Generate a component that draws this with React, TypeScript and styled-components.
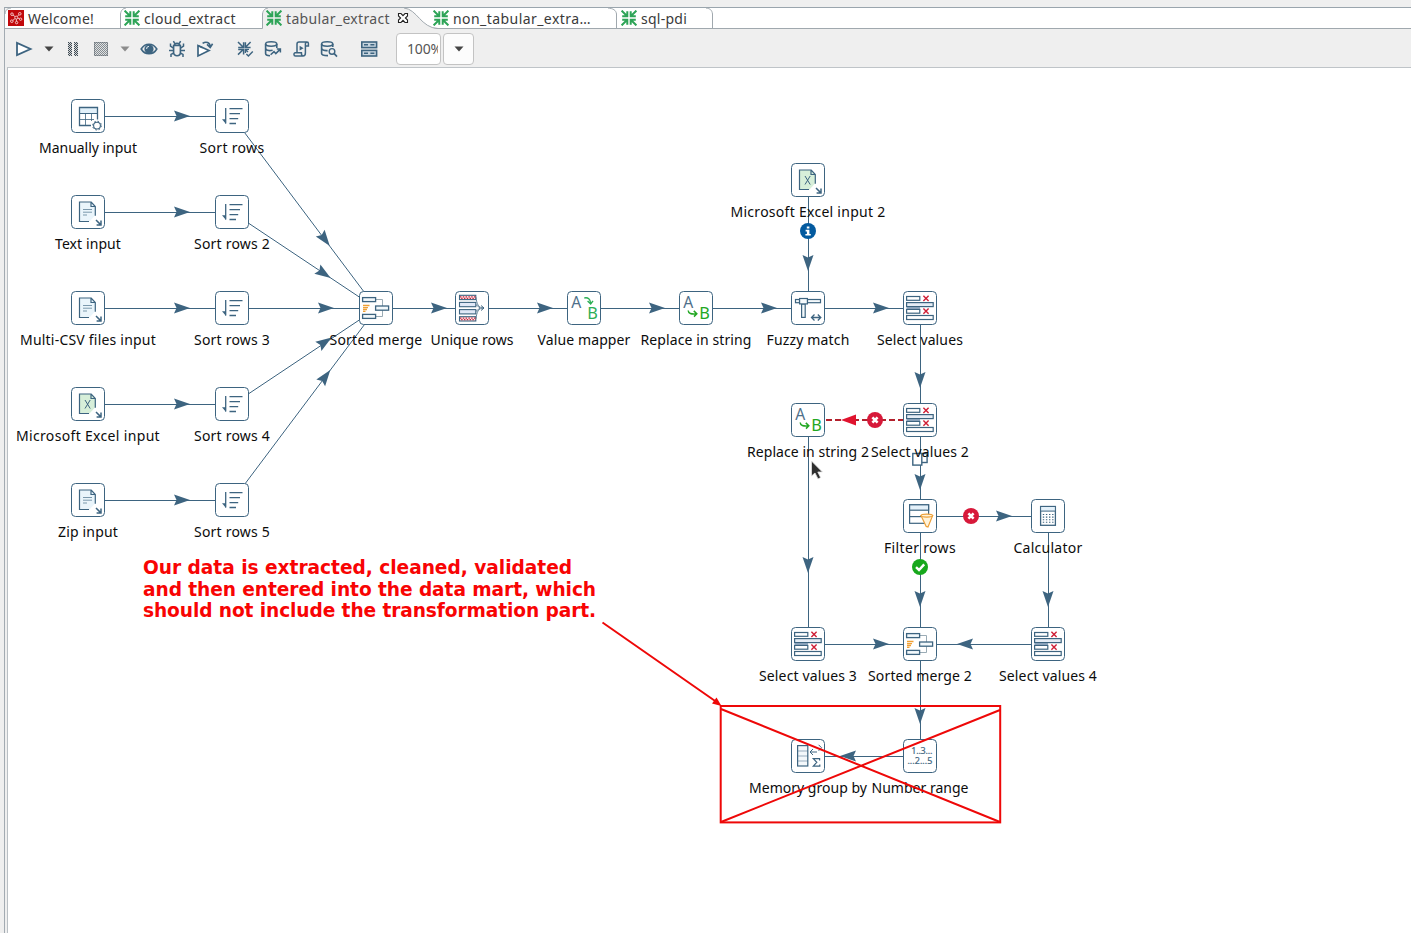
import React, { useLayoutEffect, useRef } from 'react';
import styled, { createGlobalStyle } from 'styled-components';

const INK = '#3d6480';
const UI_FONT = '"Noto Sans", "Open Sans", sans-serif';
const ORIGIN_X = 8;
const ORIGIN_Y = 68;

const GlobalStyle = createGlobalStyle`
  * { box-sizing: border-box; }
  body { margin: 0; background: #efefef; font-family: ${UI_FONT}; overflow: hidden; }
`;

const Window = styled.div`
  width: 1411px;
  height: 933px;
  padding: 7px 0 0 4px;
  background: #efefef;
`;

const Folder = styled.div`
  display: flex;
  flex-direction: column;
  height: 926px;
  border-left: 1px solid #a3abb2;
  border-top: 1px solid #9aa5ad;
`;

const TabStrip = styled.div`
  display: flex;
  height: 21px;
  flex: none;
  background: #fff;
  border-bottom: 1px solid #a0a8ae;
`;

const Tab = styled.div<{ $width: number; $active?: boolean }>`
  position: relative;
  display: flex;
  align-items: center;
  gap: 4px;
  width: ${p => p.$width}px;
  height: 20px;
  padding-left: 3px;
  flex: none;
  color: ${p => (p.$active ? '#555' : '#3a3a3a')};
  font-size: 14px;
  line-height: 20px;
`;

const TabShape = styled.svg`
  position: absolute;
  left: 0;
  top: 0;
  overflow: visible;
`;

const TabIcon = styled.svg`
  position: relative;
  flex: none;
  width: 16px;
  height: 16px;
`;

const TabText = styled.span`
  position: relative;
  top: 1px;
  white-space: nowrap;
`;

const CloseIcon = styled.svg`
  position: relative;
  margin-left: 3px;
  flex: none;
`;

const Toolbar = styled.div`
  display: flex;
  align-items: center;
  height: 38px;
  flex: none;
  padding: 2px 0 0 6px;
  background: #efefef;
`;

const Tool = styled.div<{ $width: number; $gap?: number }>`
  display: flex;
  justify-content: center;
  align-items: center;
  width: ${p => p.$width}px;
  height: 20px;
  margin-left: ${p => p.$gap ?? 0}px;
  flex: none;
  svg { display: block; overflow: visible; }
`;

const ZoomField = styled.div`
  width: 45px;
  height: 32px;
  margin-left: 13px;
  padding-left: 10px;
  border: 1px solid #c3c3c3;
  border-radius: 4px;
  background: #fff;
  color: #555;
  font-size: 14px;
  line-height: 30px;
`;

const ZoomClip = styled.div`
  overflow: hidden;
  width: 31px;
  white-space: nowrap;
`;

const ZoomButton = styled.div`
  display: flex;
  align-items: center;
  justify-content: center;
  width: 31px;
  height: 32px;
  margin-left: 2px;
  border: 1px solid #c3c3c3;
  border-radius: 4px;
  background: #fcfcfc;
`;

const Canvas = styled.div`
  position: relative;
  flex: 1;
  margin-left: 2px;
  border-left: 1px solid #b9bfc4;
  border-top: 1px solid #bfc4c8;
  background: #fff;
`;

const Layer = styled.svg`
  position: absolute;
  left: 0;
  top: 0;
  pointer-events: none;
`;

const Step = styled.div<{ $x: number; $y: number }>`
  position: absolute;
  left: ${p => p.$x - ORIGIN_X - 17}px;
  top: ${p => p.$y - ORIGIN_Y - 17}px;
  width: 34px;
  display: flex;
  flex-direction: column;
  align-items: center;
`;

const StepBox = styled.svg`
  flex: none;
  width: 34px;
  height: 34px;
`;

const StepLabel = styled.div`
  margin-top: 4px;
  color: #0c0c0c;
  font-size: 14px;
  line-height: 22px;
  white-space: nowrap;
`;

const Note = styled.div`
  position: absolute;
  left: 135px;
  top: 489px;
  color: #f80404;
  font: bold 18.6px/21.5px "DejaVu Sans", sans-serif;
  white-space: nowrap;
`;

const NoteLine = styled.div`
  height: 21.5px;
`;

/* Tracks the letters so that the text takes a given width. */
function Fit({ text, width }: { text: string; width: number }) {
  const ref = useRef<HTMLSpanElement>(null);
  useLayoutEffect(() => {
    const el = ref.current;
    if (!el) return;
    el.style.letterSpacing = '0px';
    const gap = (width - el.getBoundingClientRect().width) / text.length;
    el.style.letterSpacing = `${gap}px`;
  }, [text, width]);
  return <span ref={ref}>{text}</span>;
}

type Kind =
  | 'grid' | 'text' | 'excel' | 'sort' | 'merge' | 'unique' | 'mapper'
  | 'replace' | 'fuzzy' | 'select' | 'filter' | 'calc' | 'range' | 'group';

interface StepData { x: number; y: number; kind: Kind; label: string; w: number }

const steps: StepData[] = [
  { x: 88, y: 116, kind: 'grid', label: 'Manually input', w: 98 },
  { x: 88, y: 212, kind: 'text', label: 'Text input', w: 66 },
  { x: 88, y: 308, kind: 'text', label: 'Multi-CSV files input', w: 136 },
  { x: 88, y: 404, kind: 'excel', label: 'Microsoft Excel input', w: 144 },
  { x: 88, y: 500, kind: 'text', label: 'Zip input', w: 60 },
  { x: 232, y: 116, kind: 'sort', label: 'Sort rows', w: 65 },
  { x: 232, y: 212, kind: 'sort', label: 'Sort rows 2', w: 76 },
  { x: 232, y: 308, kind: 'sort', label: 'Sort rows 3', w: 76 },
  { x: 232, y: 404, kind: 'sort', label: 'Sort rows 4', w: 76 },
  { x: 232, y: 500, kind: 'sort', label: 'Sort rows 5', w: 76 },
  { x: 376, y: 308, kind: 'merge', label: 'Sorted merge', w: 93 },
  { x: 472, y: 308, kind: 'unique', label: 'Unique rows', w: 83 },
  { x: 584, y: 308, kind: 'mapper', label: 'Value mapper', w: 93 },
  { x: 696, y: 308, kind: 'replace', label: 'Replace in string', w: 111 },
  { x: 808, y: 180, kind: 'excel', label: 'Microsoft Excel input 2', w: 155 },
  { x: 808, y: 308, kind: 'fuzzy', label: 'Fuzzy match', w: 83 },
  { x: 920, y: 308, kind: 'select', label: 'Select values', w: 86 },
  { x: 808, y: 420, kind: 'replace', label: 'Replace in string 2', w: 122 },
  { x: 920, y: 420, kind: 'select', label: 'Select values 2', w: 98 },
  { x: 920, y: 516, kind: 'filter', label: 'Filter rows', w: 72 },
  { x: 1048, y: 516, kind: 'calc', label: 'Calculator', w: 69 },
  { x: 808, y: 644, kind: 'select', label: 'Select values 3', w: 98 },
  { x: 920, y: 644, kind: 'merge', label: 'Sorted merge 2', w: 104 },
  { x: 1048, y: 644, kind: 'select', label: 'Select values 4', w: 98 },
  { x: 808, y: 756, kind: 'group', label: 'Memory group by', w: 118 },
  { x: 920, y: 756, kind: 'range', label: 'Number range', w: 97 },
];

/* from x/y, to x/y, arrow x/y */
type Hop = [number, number, number, number, number, number];

const hops: Hop[] = [
  [88, 116, 232, 116, 182, 116],
  [88, 212, 232, 212, 182, 212],
  [88, 308, 232, 308, 182, 308],
  [88, 404, 232, 404, 182, 404],
  [88, 500, 232, 500, 182, 500],
  [232, 116, 376, 308, 325, 239.5],
  [232, 212, 376, 308, 324, 273.5],
  [232, 308, 376, 308, 326, 308],
  [232, 500, 376, 308, 325.5, 376.5],
  [232, 404, 376, 308, 325, 342],
  [376, 308, 472, 308, 439, 308],
  [472, 308, 584, 308, 545, 308],
  [584, 308, 696, 308, 657, 308],
  [696, 308, 808, 308, 769, 308],
  [808, 308, 920, 308, 881, 308],
  [808, 180, 808, 308, 808, 263],
  [920, 308, 920, 420, 920, 380],
  [920, 420, 920, 516, 920, 482],
  [920, 516, 920, 644, 920, 599],
  [920, 516, 1048, 516, 1004, 516],
  [1048, 516, 1048, 644, 1048, 599],
  [808, 420, 808, 644, 808, 565],
  [808, 644, 920, 644, 881, 644],
  [1048, 644, 920, 644, 965, 644],
  [920, 644, 920, 756, 920, 716],
  [920, 756, 808, 756, 848, 756],
];

function HopLine({ hop }: { hop: Hop }) {
  const [x1, y1, x2, y2, ax, ay] = hop;
  const angle = (Math.atan2(y2 - y1, x2 - x1) * 180) / Math.PI;
  return (
    <g>
      <line x1={x1 + 0.5} y1={y1 + 0.5} x2={x2 + 0.5} y2={y2 + 0.5} stroke={INK} strokeWidth="1" />
      <path d="M-8 -5.5L8 0L-8 5.5L-5.5 0Z" fill={INK} transform={`translate(${ax} ${ay}) rotate(${angle})`} />
    </g>
  );
}

function Cross({ x, y }: { x: number; y: number }) {
  return <path d={`M${x - 2.6} ${y - 2.6}l5.2 5.2m0 -5.2l-5.2 5.2`} stroke="#cf1f36" strokeWidth="1.4" />;
}

function CornerArrow() {
  return <path d="M25 25L29.6 29.6M30 25.6V30H25.6" fill="none" stroke={INK} strokeWidth="1.5" />;
}

function Glyph({ kind }: { kind: Kind }) {
  switch (kind) {
    case 'grid':
      return (
        <g fill="none" stroke={INK}>
          <rect x="8.5" y="8.5" width="18" height="6" fill="#e2f1fa" />
          <path d="M20 26.5H8.5V8.5H26.5V20.5" strokeWidth="1.3" />
          <path d="M8.5 14.5H26.5M8.5 20.5H23M14.5 14.5V26.5M20.5 14.5V22" strokeWidth=".8" />
          <circle cx="26" cy="26.6" r="3.4" strokeWidth="1.1" />
          <circle cx="26" cy="26.6" r="4.4" strokeWidth="1" strokeDasharray="1.6 1.85" />
        </g>
      );
    case 'text':
      return (
        <g fill="none" stroke={INK}>
          <path d="M8.5 26.5V7H20L24.5 11.5V20L18.5 26.5Z" fill="#eaf5fb" stroke="none" />
          <path d="M18 26.5H8.5V7H20.2L24.3 11.5V20.8M20 7V11.5H24.3" strokeWidth="1.2" />
          <path d="M12 14.5H21M12 17.2H21M12 20H16" strokeWidth=".8" opacity=".8" />
          <CornerArrow />
        </g>
      );
    case 'excel':
      return (
        <g fill="none" stroke={INK}>
          <path d="M8.5 26.5V7H20L24.5 11.5V20L18.5 26.5Z" fill="#d7efd9" stroke="none" />
          <path d="M18 26.5H8.5V7H20.2L24.3 11.5V20.8M20 7V11.5H24.3" strokeWidth="1.2" />
          <path d="M14 13L19.2 21.5M19.2 13L14 21.5" strokeWidth="1" />
          <CornerArrow />
        </g>
      );
    case 'sort':
      return (
        <g fill="none" stroke={INK} strokeWidth="1.3">
          <path d="M10.7 9V24.5" />
          <path d="M7 20.2H11V25Z" fill={INK} stroke="none" />
          <path d="M14.5 9.6H27.5M14.5 14.6H25M14.5 19.6H23.2M14.5 24.5H21" />
        </g>
      );
    case 'merge':
      return (
        <g fill="none" stroke={INK} strokeWidth="1.3">
          <path d="M16.5 8.5H23.5V25.5H16.5" stroke="#8ea1ad" strokeWidth=".9" />
          <rect x="3.6" y="6.6" width="13" height="4" fill="#f3f9fc" />
          <rect x="3.6" y="23.4" width="13" height="4" fill="#f3f9fc" />
          <rect x="16.6" y="15" width="13" height="4.2" fill="#f3f9fc" />
          <path d="M4 14.5H10.5M4 16.6H9M4 18.5H8M4 20.4H6.5" stroke="#f0a034" />
        </g>
      );
    case 'unique':
      return (
        <g fill="none" stroke={INK}>
          <path d="M20.8 6C22 13 23 17 29 17C23 17 22 21 20.8 28M20.8 13.5L25 17L20.8 20.5" strokeWidth=".8" />
          <path d="M26 14.5L29 17L26 19.5" strokeWidth="1" />
          {[4.3, 25.7].map(y => (
            <g key={y}>
              <rect x="4.5" y={y} width="16.3" height="4.3" fill="#fbe3e6" strokeWidth="1.1" />
              <path d={`M5 ${y + 1.5}H20.5M6.2 ${y + 3}H20.5`} stroke="#c8243a" strokeWidth="1.3" strokeDasharray="1.4 1.4" />
            </g>
          ))}
          <rect x="4.5" y="11.4" width="16.3" height="4.3" fill="#e0e8f7" strokeWidth="1.1" />
          <rect x="4.5" y="18.6" width="16.3" height="4.3" fill="#e0e8f7" strokeWidth="1.1" />
        </g>
      );
    case 'mapper':
      return (
        <g fontFamily={UI_FONT} fontSize="16.5">
          <text x="4.2" y="16.6" fill="#4f708a" textLength="10" lengthAdjust="spacingAndGlyphs">A</text>
          <text x="20.3" y="28.4" fill="#2cae55" textLength="10.6" lengthAdjust="spacingAndGlyphs">B</text>
          <path d="M17.3 7C21 6.2 23.5 8 23.7 12.5M20.6 10L23.7 13L26 9.8" fill="none" stroke="#2cae55" strokeWidth="1.4" />
        </g>
      );
    case 'replace':
      return (
        <g fontFamily={UI_FONT} fontSize="16.5">
          <text x="4.2" y="16.6" fill="#4f708a" textLength="10" lengthAdjust="spacingAndGlyphs">A</text>
          <text x="20.3" y="28.4" fill="#22a722" textLength="10.6" lengthAdjust="spacingAndGlyphs">B</text>
          <path d="M9.2 19.5C9.4 22.5 12 23.3 17.6 22.8M14.8 19.9L17.8 22.8L15 25.6" fill="none" stroke="#22a722" strokeWidth="1.5" />
        </g>
      );
    case 'fuzzy':
      return (
        <g fill="#f5fafc" stroke={INK} strokeWidth="1.2">
          <rect x="4.5" y="8.5" width="4" height="3.2" />
          <rect x="16.5" y="8.5" width="13" height="3.2" />
          <rect x="10.6" y="13" width="3.6" height="13.4" />
          <rect x="8.6" y="7.5" width="7.8" height="5.4" />
          <path d="M20.8 26.5H29.5M23.5 23.5L20.5 26.5L23.5 29.5M26.8 23.5L29.8 26.5L26.8 29.5" fill="none" strokeWidth="1.3" />
        </g>
      );
    case 'select':
      return (
        <g fill="#fff" stroke={INK} strokeWidth="1.2">
          <rect x="3.6" y="14" width="13.4" height="6" fill="#9db2c8" stroke="none" />
          <rect x="3.6" y="5.5" width="13.2" height="3.8" />
          <rect x="3.6" y="11.6" width="26.6" height="4" fill="#e6edf5" />
          <rect x="3.6" y="18.4" width="13.2" height="3.8" />
          <rect x="3.6" y="24.5" width="26.6" height="4" />
          <Cross x={23} y={7.4} />
          <Cross x={23} y={20.2} />
        </g>
      );
    case 'filter':
      return (
        <g fill="none" stroke={INK} strokeWidth="1.2">
          <rect x="6.6" y="5.8" width="19" height="18.5" fill="#fff" />
          <rect x="6.6" y="5.8" width="19" height="5.4" fill="#e4f1fa" />
          <path d="M6.6 17.6H25.6" />
          <path d="M18 16.6L23.2 27.4L25 28L29.6 16.6Z" fill="#fff3da" stroke="#eda13a" />
          <ellipse cx="23.8" cy="16.6" rx="5.8" ry="1.5" fill="#fff3da" stroke="#eda13a" />
        </g>
      );
    case 'calc':
      return (
        <g fill="none" stroke={INK} strokeWidth="1.3">
          <rect x="9.6" y="7.5" width="14.8" height="18.8" fill="#fff" />
          <rect x="9.6" y="7.5" width="14.8" height="4.6" fill="#e4f1fa" strokeWidth="1" />
          <path d="M11.8 15.5H22.8M11.8 18.1H22.8M11.8 20.7H22.8M11.8 23.3H22.8" strokeWidth="1.1" strokeDasharray="1.4 1.7" />
        </g>
      );
    case 'range':
      return (
        <g fill={INK} fontFamily={UI_FONT} fontSize="9" stroke={INK} strokeWidth=".2">
          <text x="8.3" y="14.8" textLength="21">1..3...</text>
          <text x="4.4" y="25.2" textLength="25">...2...5</text>
        </g>
      );
    case 'group':
      return (
        <g fill="none" stroke={INK} strokeWidth="1.2">
          <rect x="6.6" y="6.6" width="10.2" height="20.4" fill="#f4f8fb" />
          <path d="M6.6 12H16.8M6.6 17H16.8M6.6 22H16.8" strokeWidth=".7" opacity=".7" />
          <path d="M19 13H26M22 10L19 13L22 16M27.6 5.8L30.6 8.8L27.6 11.8" strokeWidth="1" />
          <path d="M28.6 21.5V19.7H22.3L25.8 23.3L22.3 27.2H28.8V25.4" strokeWidth="1.2" />
        </g>
      );
  }
}

function StepNode({ step }: { step: StepData }) {
  return (
    <Step $x={step.x} $y={step.y}>
      <StepBox viewBox="0 0 34 34">
        <rect x=".5" y=".5" width="33" height="33" rx="4" fill="#fff" stroke={INK} />
        <Glyph kind={step.kind} />
      </StepBox>
      <StepLabel><Fit text={step.label} width={step.w} /></StepLabel>
    </Step>
  );
}

function ErrorBadge({ x, y }: { x: number; y: number }) {
  return (
    <g>
      <circle cx={x} cy={y} r="8" fill="#d7193a" />
      <path d={`M${x - 2.6} ${y - 2.6}l5.2 5.2m0 -5.2l-5.2 5.2`} stroke="#fff" strokeWidth="2.6" />
    </g>
  );
}

function TransIcon() {
  const arm = 'M0.6 .6L6 6M1.2 6.3H6.3V1.2';
  return (
    <TabIcon viewBox="0 0 16 16" fill="none" stroke="#2da457" strokeWidth="2">
      {[0, 90, 180, 270].map(a => <path key={a} d={arm} transform={`rotate(${a} 8 8)`} />)}
    </TabIcon>
  );
}

function WelcomeIcon() {
  return (
    <TabIcon viewBox="0 0 16 16">
      <rect width="16" height="16" fill="#c1090c" />
      <g fill="none" stroke="#f6d4d4" strokeWidth=".9">
        <circle cx="4" cy="4.2" r="1.3" /><circle cx="11.8" cy="3.8" r="1.3" />
        <circle cx="8.3" cy="7.6" r="1.5" /><circle cx="3.8" cy="11.2" r="1.3" />
        <circle cx="8.6" cy="12.6" r="1.2" /><circle cx="12.6" cy="9.2" r="1.2" />
        <path d="M5 5L7 6.6M10.8 4.8L9.4 6.4M7 8.6L4.8 10.4M8.4 9.2V11.4M9.8 8L11.4 8.8" />
      </g>
    </TabIcon>
  );
}

function Caret({ color }: { color: string }) {
  return <svg width="10" height="6"><path d="M.5 .5H9.5L5 5.5Z" fill={color} /></svg>;
}

function ToolIcon({ children }: { children: React.ReactNode }) {
  return (
    <svg width="18" height="18" viewBox="0 0 18 18" fill="none" stroke={INK} strokeWidth="1.6">
      {children}
    </svg>
  );
}

function Toolbars() {
  return (
    <Toolbar>
      <Tool $width={26}><ToolIcon><path d="M2 3V15L15.5 9Z" strokeWidth="1.8" fill="#fff" /></ToolIcon></Tool>
      <Tool $width={24}><Caret color="#444" /></Tool>
      <Tool $width={24}>
        <ToolIcon>
          <defs>
            <pattern id="check" width="2" height="2" patternUnits="userSpaceOnUse">
              <g stroke="none">
                <rect width="2" height="2" fill="#d4d7d9" />
                <rect width="1" height="1" fill="#3f4a52" />
                <rect x="1" y="1" width="1" height="1" fill="#3f4a52" />
              </g>
            </pattern>
          </defs>
          <path d="M4 2H8V16H4ZM10 2H14V16H10Z" fill="url(#check)" stroke="none" />
        </ToolIcon>
      </Tool>
      <Tool $width={32}>
        <ToolIcon>
          <rect x="2" y="2" width="14" height="14" fill="url(#check)" opacity=".6" stroke="none" />
          <rect x="2.5" y="2.5" width="13" height="13" stroke="#59636b" strokeWidth="1" strokeDasharray="1 1" />
        </ToolIcon>
      </Tool>
      <Tool $width={16}><Caret color="#8c8c8c" /></Tool>
      <Tool $width={32}>
        <ToolIcon>
          <path d="M1.2 9C5 2.6 13 2.6 16.8 9C13 15.4 5 15.4 1.2 9Z" />
          <circle cx="9" cy="9" r="4.6" fill={INK} stroke="none" />
          <path d="M6.6 9A2.4 2.4 0 0 1 9 6.4" stroke="#dfe8ee" strokeWidth="1" />
        </ToolIcon>
      </Tool>
      <Tool $width={24}>
        <ToolIcon>
          <path d="M5.6 5.5H12.4V12.5C12.4 16.8 5.6 16.8 5.6 12.5Z M6.3 5.5C6.3 2.6 11.7 2.6 11.7 5.5" />
          <path d="M5.5 8.2L2.5 6V3.6M12.5 8.2L15.5 6V3.6M5.5 10.6H1M12.5 10.6H17M5.8 13L3 14.4V17M12.2 13L15 14.4V17M6.8 3.6L5.4 1.2M11.2 3.6L12.6 1.2" strokeWidth="1.5" />
        </ToolIcon>
      </Tool>
      <Tool $width={32}>
        <ToolIcon>
          <path d="M2 5.6V16L13 10.6Z" fill="#fff" strokeWidth="1.7" />
          <path d="M2 5.6L6.6 7.8M6.6 3.4C10 1 14 2.4 14.2 6.4M11 4.4L14.2 7.6L16.6 3.8" />
        </ToolIcon>
      </Tool>
      <Tool $width={28} $gap={10}>
        <ToolIcon>
          <path d="M2 2L7 7M2.2 7.6H7.6V2.2M14.6 2L9.8 7M9.4 2.2V7.6H14.6M2 14.6L7 9.8M2.2 9.4H7.6V14.6" strokeWidth="1.5" />
          <path d="M9.4 9.4L12 12M9.4 13V9.4H13M10.4 14L12.4 16L16.8 11.4" strokeWidth="1.4" />
        </ToolIcon>
      </Tool>
      <Tool $width={28}>
        <ToolIcon>
          <ellipse cx="7.2" cy="4" rx="5.6" ry="2.2" />
          <path d="M1.6 4V13.4C1.6 14.8 4 15.6 6 15.8M12.8 4V8M1.6 8.6C2.6 10.6 6 10.8 8.6 10.2" />
          <path d="M6.6 14.8L10 11.6L11.8 13.6L16 9.4M12.8 9H16.4V12.4" strokeWidth="1.5" />
        </ToolIcon>
      </Tool>
      <Tool $width={28}>
        <ToolIcon>
          <path d="M5 12.6V4C5 2.4 6 2 7 2H15.4C13.6 2 13.4 3.2 13.4 4V13C13.4 15 12.4 16 11 16H3.4C1.6 16 1.4 12.8 3.2 12.8H9.4C9.4 15 10 16 11 16M13.4 6H16.4V3.4C16.4 2.4 16 2 15.2 2" strokeWidth="1.5" />
          <path d="M7.6 5.8V10.6L11.6 8.2Z" fill={INK} stroke="none" />
        </ToolIcon>
      </Tool>
      <Tool $width={28}>
        <ToolIcon>
          <ellipse cx="7.2" cy="4" rx="5.6" ry="2.2" />
          <path d="M1.6 4V13.4C1.6 14.8 4.6 15.6 8 15.6M12.8 4V7M1.6 8.6C2.6 10.4 5 10.8 7.6 10.6" />
          <circle cx="12" cy="11.4" r="2.8" strokeWidth="1.4" /><path d="M14 13.4L17 16.6" />
        </ToolIcon>
      </Tool>
      <Tool $width={28} $gap={12}>
        <ToolIcon>
          <rect x="1.8" y="2" width="14.8" height="5.6" fill="#c7d5df" />
          <rect x="1.8" y="10.4" width="14.8" height="5.6" fill="#c7d5df" />
          <path d="M4 4.8H8M10.4 4.8H14.4M4 13.2H8M10.4 13.2H14.4" strokeWidth="1.4" />
        </ToolIcon>
      </Tool>
      <ZoomField><ZoomClip><Fit text="100%" width={35} /></ZoomClip></ZoomField>
      <ZoomButton><Caret color="#444" /></ZoomButton>
    </Toolbar>
  );
}

function Tabs() {
  const line = { fill: 'none', stroke: '#a0a8ae', strokeWidth: 1 };
  return (
    <TabStrip>
      <Tab $width={116}>
        <TabShape width="116" height="20">
          <path d="M0 0H5C2 .5 .5 2 0 5Z" fill="#efefef" />
          <path d="M0 6C.5 2 2 .5 6 0" {...line} />
        </TabShape>
        <WelcomeIcon />
        <TabText><Fit text="Welcome!" width={66} /></TabText>
      </Tab>
      <Tab $width={142}>
        <TabShape width="142" height="20"><path d="M-.5 20V6C0 2 2 .5 5 0" {...line} /></TabShape>
        <TransIcon />
        <TabText><Fit text="cloud_extract" width={92} /></TabText>
      </Tab>
      <Tab $width={167} $active>
        <TabShape width="176" height="22">
          <path d="M-.5 21V6C0 2 2 .5 5 0H141C154 1 158 20 175 21Z" fill="#efefef" />
          <path d="M-.5 20.5V6C0 2 2 .5 5 0M141 0C154 1 158 20 175 20.5" {...line} />
        </TabShape>
        <TransIcon />
        <TabText><Fit text="tabular_extract" width={104} /></TabText>
        <CloseIcon width="12" height="12" viewBox="0 0 12 12">
          <path d="M1.5 1.5H4L6 3.6L8 1.5H10.5V4L8.4 6L10.5 8V10.5H8L6 8.4L4 10.5H1.5V8L3.6 6L1.5 4Z" fill="#fff" stroke="#222" strokeWidth="1.1" />
        </CloseIcon>
      </Tab>
      <Tab $width={188}>
        <TabShape width="188" height="20"><path d="M178 0C183 .5 186 2 186.5 6V20" {...line} /></TabShape>
        <TransIcon />
        <TabText><Fit text="non_tabular_extra…" width={138} /></TabText>
      </Tab>
      <Tab $width={95}>
        <TabShape width="95" height="20"><path d="M88 0C92 .5 94 2 94.5 6V20" {...line} /></TabShape>
        <TransIcon />
        <TabText><Fit text="sql-pdi" width={46} /></TabText>
      </Tab>
    </TabStrip>
  );
}

export default function App() {
  const view = `${ORIGIN_X} ${ORIGIN_Y} 1403 865`;
  return (
    <>
      <GlobalStyle />
      <Window>
        <Folder>
          <Tabs />
          <Toolbars />
          <Canvas>
            <Layer width="1403" height="865" viewBox={view}>
              {hops.map((hop, i) => <HopLine key={i} hop={hop} />)}
              <path d="M826 420H904" stroke="#b3202c" strokeWidth="2" strokeDasharray="6 3" />
              <path d="M841 420L856 414.5V425.5Z" fill="#e0132f" />
              <ErrorBadge x={875} y={420} />
              <ErrorBadge x={971} y={516} />
              <circle cx="808" cy="231" r="8" fill="#035a9f" />
              <path d="M806.8 226.4h2.6v2h-2.6zM805.6 229.8h3.8v4.2h1.4v1.6h-5.4v-1.6h1.5v-2.6h-1.3z" fill="#fff" />
              <circle cx="920" cy="567" r="8" fill="#17a81c" />
              <path d="M916 567.2L919 570L924.2 564.4" fill="none" stroke="#fff" strokeWidth="2.4" />
              <g stroke={INK} strokeWidth="1.4" fill="#fff">
                <rect x="918.5" y="453.5" width="8.6" height="9" />
                <rect x="912.8" y="453.5" width="9" height="11.6" />
              </g>
            </Layer>
            {steps.map(step => <StepNode key={step.label} step={step} />)}
            <Note>
              <NoteLine><Fit text="Our data is extracted, cleaned, validated" width={429} /></NoteLine>
              <NoteLine><Fit text="and then entered into the data mart, which" width={453} /></NoteLine>
              <NoteLine><Fit text="should not include the transformation part." width={453} /></NoteLine>
            </Note>
            <Layer width="1403" height="865" viewBox={view}>
              <g fill="none" stroke="#ee0808" strokeWidth="2">
                <rect x="720.7" y="706" width="279.5" height="116.4" />
                <path d="M721 709L1000 822M1000 710L721 822M602.5 622.5L718 703" />
              </g>
              <path d="M721.5 706L712 703.5L716.5 697.5Z" fill="#ee0808" />
              <path d="M811.5 461V476L815 473L818 479L820.6 477.6L817.8 472H822.4Z" fill="#2f2f2f" stroke="#e4e4e4" strokeWidth=".8" />
            </Layer>
          </Canvas>
        </Folder>
      </Window>
    </>
  );
}
